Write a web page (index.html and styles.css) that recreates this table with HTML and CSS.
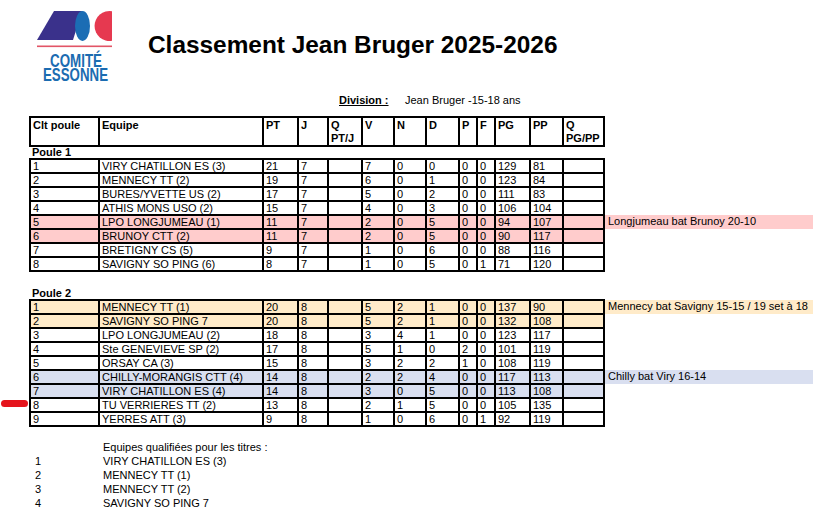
FILE: index.html
```html
<!DOCTYPE html>
<html lang="fr">
<head>
<meta charset="utf-8">
<title>Classement Jean Bruger 2025-2026</title>
<link rel="stylesheet" href="styles.css">
</head>
<body>
<div class="page">
  <header class="header">
    <svg class="logo" width="80" height="74" viewBox="0 0 80 74" aria-label="Comité Essonne">
      <polygon points="19,1 47,1 38,30 2,30" fill="#3a318b"/>
      <ellipse cx="47.5" cy="16" rx="7.5" ry="15" fill="#1b6db4"/>
      <path d="M77,1.2 A15,15 0 1 0 77,30.8 Z" fill="#e63950"/>
      <rect x="2" y="35.5" width="75" height="1.6" fill="#e25566"/>
      <text x="15" y="57" textLength="52" lengthAdjust="spacingAndGlyphs" class="logo-text">COMITÉ</text>
      <text x="8" y="71" textLength="65" lengthAdjust="spacingAndGlyphs" class="logo-text">ESSONNE</text>
    </svg>
    <h1 class="title">Classement Jean Bruger 2025-2026</h1>
  </header>

  <div class="division">
    <span class="division-label">Division :</span>
    <span class="division-value">Jean Bruger -15-18 ans</span>
  </div>

  <table class="standings">
    <colgroup>
      <col class="c-clt"><col class="c-eq"><col class="c-pt"><col class="c-j"><col class="c-q"><col class="c-v"><col class="c-n"><col class="c-d"><col class="c-p"><col class="c-f"><col class="c-pg"><col class="c-pp"><col class="c-qq"><col class="c-note">
    </colgroup>
    <tr class="hd">
      <th>Clt poule</th><th>Equipe</th><th>PT</th><th>J</th><th>Q<br>PT/J</th><th>V</th><th>N</th><th>D</th><th>P</th><th>F</th><th>PG</th><th>PP</th><th>Q<br>PG/PP</th><th class="note"></th>
    </tr>
    <tr class="lbl"><td colspan="14">Poule 1</td></tr>
    <tr><td>1</td><td>VIRY CHATILLON ES (3)</td><td>21</td><td>7</td><td></td><td>7</td><td>0</td><td>0</td><td>0</td><td>0</td><td>129</td><td>81</td><td></td><td class="note"></td></tr>
    <tr><td>2</td><td>MENNECY TT (2)</td><td>19</td><td>7</td><td></td><td>6</td><td>0</td><td>1</td><td>0</td><td>0</td><td>123</td><td>84</td><td></td><td class="note"></td></tr>
    <tr><td>3</td><td>BURES/YVETTE US (2)</td><td>17</td><td>7</td><td></td><td>5</td><td>0</td><td>2</td><td>0</td><td>0</td><td>111</td><td>83</td><td></td><td class="note"></td></tr>
    <tr><td>4</td><td>ATHIS MONS USO (2)</td><td>15</td><td>7</td><td></td><td>4</td><td>0</td><td>3</td><td>0</td><td>0</td><td>106</td><td>104</td><td></td><td class="note"></td></tr>
    <tr class="pink"><td>5</td><td>LPO LONGJUMEAU (1)</td><td>11</td><td>7</td><td></td><td>2</td><td>0</td><td>5</td><td>0</td><td>0</td><td>94</td><td>107</td><td></td><td class="note filled">Longjumeau bat Brunoy 20-10</td></tr>
    <tr class="pink"><td>6</td><td>BRUNOY CTT (2)</td><td>11</td><td>7</td><td></td><td>2</td><td>0</td><td>5</td><td>0</td><td>0</td><td>90</td><td>117</td><td></td><td class="note"></td></tr>
    <tr><td>7</td><td>BRETIGNY CS (5)</td><td>9</td><td>7</td><td></td><td>1</td><td>0</td><td>6</td><td>0</td><td>0</td><td>88</td><td>116</td><td></td><td class="note"></td></tr>
    <tr><td>8</td><td>SAVIGNY SO PING (6)</td><td>8</td><td>7</td><td></td><td>1</td><td>0</td><td>5</td><td>0</td><td>1</td><td>71</td><td>120</td><td></td><td class="note"></td></tr>
    <tr class="sp"><td colspan="14"></td></tr>
    <tr class="lbl lbl2"><td colspan="14">Poule 2</td></tr>
    <tr class="orange"><td>1</td><td>MENNECY TT (1)</td><td>20</td><td>8</td><td></td><td>5</td><td>2</td><td>1</td><td>0</td><td>0</td><td>137</td><td>90</td><td></td><td class="note filled">Mennecy bat Savigny 15-15 / 19 set à 18</td></tr>
    <tr class="orange"><td>2</td><td>SAVIGNY SO PING 7</td><td>20</td><td>8</td><td></td><td>5</td><td>2</td><td>1</td><td>0</td><td>0</td><td>132</td><td>108</td><td></td><td class="note"></td></tr>
    <tr><td>3</td><td>LPO LONGJUMEAU (2)</td><td>18</td><td>8</td><td></td><td>3</td><td>4</td><td>1</td><td>0</td><td>0</td><td>123</td><td>117</td><td></td><td class="note"></td></tr>
    <tr><td>4</td><td>Ste GENEVIEVE SP (2)</td><td>17</td><td>8</td><td></td><td>5</td><td>1</td><td>0</td><td>2</td><td>0</td><td>101</td><td>119</td><td></td><td class="note"></td></tr>
    <tr><td>5</td><td>ORSAY CA (3)</td><td>15</td><td>8</td><td></td><td>3</td><td>2</td><td>2</td><td>1</td><td>0</td><td>108</td><td>119</td><td></td><td class="note"></td></tr>
    <tr class="blue"><td>6</td><td>CHILLY-MORANGIS CTT (4)</td><td>14</td><td>8</td><td></td><td>2</td><td>2</td><td>4</td><td>0</td><td>0</td><td>117</td><td>113</td><td></td><td class="note filled">Chilly bat Viry 16-14</td></tr>
    <tr class="blue"><td>7</td><td>VIRY CHATILLON ES (4)</td><td>14</td><td>8</td><td></td><td>3</td><td>0</td><td>5</td><td>0</td><td>0</td><td>113</td><td>108</td><td></td><td class="note"></td></tr>
    <tr><td class="marked">8<span class="marker"></span></td><td>TU VERRIERES TT (2)</td><td>13</td><td>8</td><td></td><td>2</td><td>1</td><td>5</td><td>0</td><td>0</td><td>105</td><td>135</td><td></td><td class="note"></td></tr>
    <tr><td>9</td><td>YERRES ATT (3)</td><td>9</td><td>8</td><td></td><td>1</td><td>0</td><td>6</td><td>0</td><td>1</td><td>92</td><td>119</td><td></td><td class="note"></td></tr>
  </table>

  <div class="qualified">
    <span></span><span>Equipes qualifiées pour les titres :</span>
    <span>1</span><span>VIRY CHATILLON ES (3)</span>
    <span>2</span><span>MENNECY TT (1)</span>
    <span>3</span><span>MENNECY TT (2)</span>
    <span>4</span><span>SAVIGNY SO PING 7</span>
  </div>
</div>
</body>
</html>
```

FILE: styles.css
```css
html, body {
  margin: 0;
  padding: 0;
  background: #ffffff;
}

body {
  width: 813px;
  height: 512px;
  overflow: hidden;
  font-family: "Liberation Sans", Arial, sans-serif;
  color: #000;
  font-size: 11px;
}

.page {
  display: flex;
  flex-direction: column;
}

.header {
  display: flex;
  align-items: flex-start;
  padding: 10px 0 0 35px;
  height: 72px;
}

.logo {
  display: block;
  flex: none;
  overflow: visible;
  margin-bottom: -2px;
}

.logo-text {
  font-family: "Liberation Sans", Arial, sans-serif;
  font-weight: bold;
  font-size: 18px;
  fill: #1b6cb1;
}

.title {
  margin: 21px 0 0 33px;
  font-size: 24.4px;
  line-height: 28px;
  font-weight: bold;
  white-space: nowrap;
}

.division {
  display: flex;
  margin: 12px 0 0 339px;
  line-height: 12px;
  font-size: 11px;
}

.division-label {
  font-weight: bold;
  text-decoration: underline;
  width: 66px;
}

.standings {
  margin: 10px 0 0 29px;
  border-collapse: collapse;
  table-layout: fixed;
  width: 783px;
  font-size: 11px;
}

.c-clt { width: 69px; }
.c-eq { width: 164px; }
.c-pt { width: 35px; }
.c-j { width: 30px; }
.c-q { width: 34px; }
.c-v { width: 32px; }
.c-n { width: 32px; }
.c-d { width: 33px; }
.c-p { width: 18px; }
.c-f { width: 18px; }
.c-pg { width: 35px; }
.c-pp { width: 33px; }
.c-qq { width: 41px; }
.c-note { width: 209px; }

.standings th,
.standings td {
  border: 2px solid #000;
  padding: 0 0 0 2px;
  line-height: 12px;
  height: 12px;
  text-align: left;
  vertical-align: top;
  white-space: nowrap;
  overflow: hidden;
}

.standings .hd th {
  font-weight: bold;
  line-height: 13px;
  height: 26px;
  padding-top: 1px;
}

.standings .note,
.standings .hd th.note {
  border: none;
  padding-left: 3px;
}

.standings .lbl td {
  border: none;
  font-weight: bold;
  height: 11px;
  line-height: 11px;
  padding-left: 2px;
}

.standings .lbl2 td {
  height: 12px;
  line-height: 12px;
}

.standings .sp td {
  border: none;
  height: 15px;
  padding: 0;
}

.pink td { background: #ffcccc; }
.pink td.note { background: transparent; }
.pink td.note.filled { background: #ffcccc; }

.orange td { background: #ffebc9; }
.orange td.note { background: transparent; }
.orange td.note.filled { background: #ffebc9; }

.blue td { background: #d9dff0; }
.blue td.note { background: transparent; }
.blue td.note.filled { background: #d9dff0; }

.standings td.marked {
  position: relative;
  overflow: visible;
}

.marker {
  position: absolute;
  left: -30px;
  top: 1px;
  width: 27px;
  height: 7px;
  border-radius: 4px;
  background: #e5141c;
}

.qualified {
  display: grid;
  grid-template-columns: 68px auto;
  margin: 13px 0 0 35px;
  line-height: 14px;
  font-size: 11px;
}
```
